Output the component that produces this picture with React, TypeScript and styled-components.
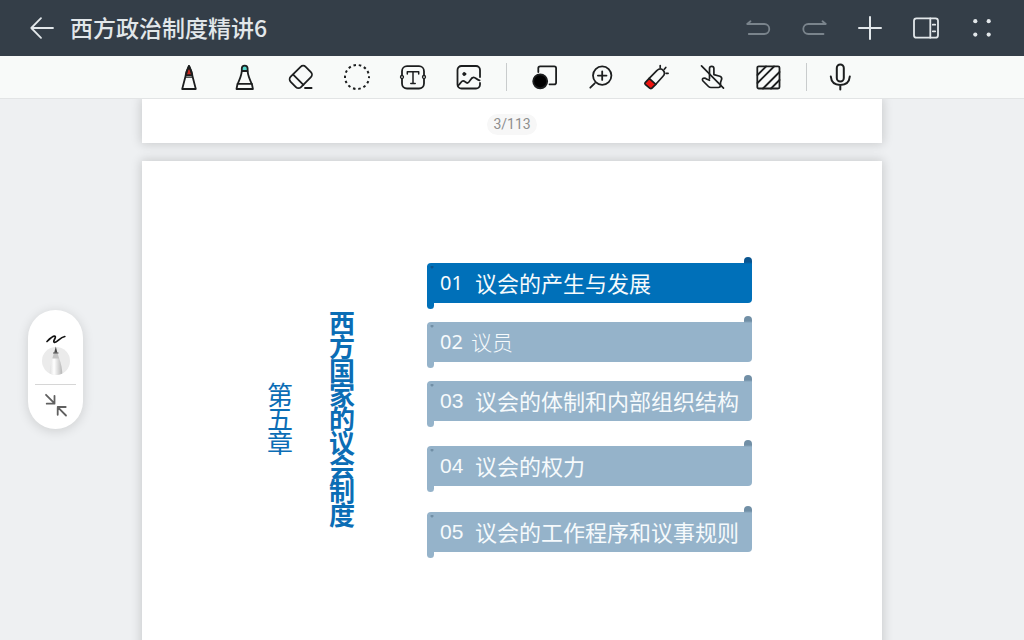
import React from "react";
import styled, { createGlobalStyle } from "styled-components";

const GlobalStyle = createGlobalStyle`
  *, *::before, *::after { box-sizing: border-box; }
  body {
    margin: 0;
    background: #eef0f2;
    font-family: "Noto Sans CJK SC", "Noto Sans", sans-serif;
  }
  h1, h2, p, ol { margin: 0; padding: 0; }
`;

const Screen = styled.div`
  height: 100vh;
  display: flex;
  flex-direction: column;
  overflow: hidden;
`;

const Header = styled.header`
  flex: none;
  height: 56px;
  display: flex;
  align-items: center;
  padding: 0 14px;
  background: #343e48;
  color: #e2e7ea;
`;

const IconButton = styled.button`
  flex: 0 1 56px;
  height: 40px;
  padding: 0;
  border: 0;
  background: none;
  color: inherit;
  display: flex;
  align-items: center;
  justify-content: center;
  cursor: pointer;

  &:disabled {
    color: #7a848c;
    cursor: default;
  }
`;

const DocTitle = styled.h1`
  flex: 1;
  padding-bottom: 2px;
  font-size: 23px;
  line-height: 32px;
  font-weight: 500;
  white-space: nowrap;
`;

const Toolbar = styled.nav`
  flex: none;
  height: 43px;
  display: flex;
  align-items: center;
  justify-content: center;
  padding-left: 5px;
  background: #f8faf9;
  border-bottom: 1px solid #e2e4e5;
  color: #1c1e1f;
`;

const Separator = styled.span<{ $before: number; $after: number }>`
  width: 1px;
  height: 28px;
  margin: 0 ${(p) => p.$after}px 0 ${(p) => p.$before}px;
  background: #c9cccd;
`;

const Viewer = styled.main`
  flex: 1;
  min-height: 0;
  overflow: hidden;
  display: flex;
  flex-direction: column;
  align-items: center;
  gap: 18px;
`;

const Sheet = styled.section`
  flex: none;
  width: calc(100% - 284px);
  background: #fff;
  box-shadow: 0 0 10px 1px rgba(0, 0, 0, 0.16);
`;

const PreviousSheet = styled(Sheet)`
  display: flex;
  justify-content: center;
  padding: 15px 0 8px;
`;

const PageBadge = styled.p`
  padding: 0 6px;
  border-radius: 11px;
  background: #f7f7f7;
  color: #8e8e8e;
  font-family: Roboto, "Liberation Sans", sans-serif;
  font-size: 14px;
  line-height: 21px;
`;

const Slide = styled(Sheet)`
  aspect-ratio: 4 / 3;
  padding: 102px 130px 0 125px;
  display: flex;
  align-items: flex-start;
`;

const SlideRow = styled.div`
  flex: 1;
  display: flex;
  align-items: center;
`;

const VerticalText = styled.p<{ $bold?: boolean; $after: number }>`
  flex: none;
  width: 26px;
  margin-right: ${(p) => p.$after}px;
  padding-bottom: 4px;
  color: #0b6db5;
  font-size: 26px;
  line-height: 24px;
  font-weight: ${(p) => (p.$bold ? 700 : 400)};
  word-break: break-all;
`;

const Banners = styled.ol`
  flex: 1;
  list-style: none;
  padding-bottom: 24px;
`;

const Banner = styled.li<{ $active?: boolean; $before: number }>`
  --fill: ${(p) => (p.$active ? "#0070b9" : "#95b3ca")};
  --curl: ${(p) => (p.$active ? "#0a5590" : "#718fa6")};
  position: relative;
  height: 40px;
  margin-top: ${(p) => p.$before}px;
  padding-left: 13px;
  display: flex;
  align-items: center;
  border-radius: 4px 0 4px 0;
  background: var(--fill);
  color: #f6fafc;
  white-space: nowrap;

  /* rolled edges of the scroll */
  &::before {
    content: "";
    position: absolute;
    left: 0;
    top: 3px;
    width: 7px;
    height: 43px;
    border-radius: 0 0 4px 4px;
    background: radial-gradient(circle at 5px 1px, var(--curl) 1px, transparent 2px), var(--fill);
  }
  &::after {
    content: "";
    position: absolute;
    right: 0;
    top: -6px;
    width: 8px;
    height: 12px;
    border-radius: 4px 4px 0 0;
    background: linear-gradient(var(--curl) 5px, var(--fill) 7px);
  }
`;

const BannerNumber = styled.span<{ $humanist?: boolean }>`
  width: 35px;
  font-family: ${(p) => (p.$humanist ? '"Noto Sans"' : '"Liberation Sans"')}, sans-serif;
  font-size: ${(p) => (p.$humanist ? 20 : 21)}px;
  line-height: 28px;
`;

const BannerText = styled.span<{ $small?: boolean }>`
  margin-left: ${(p) => (p.$small ? -4 : 0)}px;
  padding-bottom: 2px;
  font-size: ${(p) => (p.$small ? 21 : 22)}px;
  line-height: 32px;
  font-weight: ${(p) => (p.$small ? 300 : 400)};
`;

const FloatingPill = styled.aside`
  position: absolute;
  left: 28px;
  top: 310px;
  width: 55px;
  display: flex;
  flex-direction: column;
  align-items: center;
  border-radius: 28px;
  background: #fff;
  box-shadow: 0 2px 12px rgba(0, 0, 0, 0.14);
  color: #606060;
`;

const PillButton = styled.button<{ $height: number }>`
  width: 100%;
  height: ${(p) => p.$height}px;
  padding: 0;
  border: 0;
  background: none;
  color: inherit;
  display: flex;
  justify-content: center;
  cursor: pointer;
`;

const PillDivider = styled.span`
  width: 41px;
  height: 1px;
  background: #d6d6d6;
`;

const IconSvg = styled.svg`
  flex: none;
  display: block;
  width: 32px;
  height: 32px;
  fill: none;
  stroke: currentColor;
  stroke-linecap: round;
  stroke-linejoin: round;
`;

const Icon = ({ w = 1.8, children }: { w?: number; children: React.ReactNode }) => (
  <IconSvg viewBox="0 0 32 32" strokeWidth={w} aria-hidden="true">
    {children}
  </IconSvg>
);

const tools = [
  {
    label: "钢笔",
    icon: (
      <Icon>
        <path d="M12.7 14.2C13.3 11 14.8 7.5 16 5C17.200 7.5 18.700 11 19.300 14.2Z" fill="#c6281f" />
        <path d="M9.200 28L12.700 14.5C13.300 11 14.800 7.500 16 5C17.200 7.500 18.700 11 19.300 14.500L22.800 28Z" />
        <path d="M12.700 16.200H19.300" strokeWidth="1.2" />
      </Icon>
    ),
  },
  {
    label: "荧光笔",
    icon: (
      <Icon>
        <path d="M12.8 10V7.5a2.9 2.9 0 0 1 5.8 0V10Z" fill="#56d8cd" />
        <path d="M12.8 10.2C12.4 14.5 11 18 8.7 22.8H22.7C20.4 18 19 14.5 18.6 10.2Z" />
        <path d="M8.5 23L7.5 28H23.9L22.9 23" />
      </Icon>
    ),
  },
  {
    label: "橡皮擦",
    icon: (
      <Icon>
        <rect x="5.2" y="8.6" width="21.2" height="14.6" rx="3.6" transform="rotate(-45 15.8 15.9)" />
        <path d="M8.2 13.7L18.4 23.9M20 27H26.6" />
      </Icon>
    ),
  },
  {
    label: "套索",
    icon: (
      <Icon w={2}>
        <circle cx="16" cy="16" r="12" strokeDasharray="2.5 2.8856" strokeDashoffset="1.25" strokeLinecap="butt" />
      </Icon>
    ),
  },
  {
    label: "文本",
    icon: (
      <Icon>
        <rect x="5" y="5.2" width="22" height="22.3" rx="5" />
        <circle cx="5" cy="16" r="1.5" fill="#f8faf9" strokeWidth="1.3" />
        <circle cx="27" cy="16" r="1.5" fill="#f8faf9" strokeWidth="1.3" />
        <path d="M10.3 13V10.8H21.7V13M16 10.8V22.6M13.8 22.6H18.2" strokeWidth="1.5" />
      </Icon>
    ),
  },
  {
    label: "图片",
    icon: (
      <Icon>
        <path d="M27 16V9a4 4 0 0 0-4-4H8.500a4 4 0 0 0-4 4V23.500a4 4 0 0 0 4 4H23a4 4 0 0 0 4-4V22" />
        <path d="M5.300 24.300C7 23.500 8 19.800 10 19.800C12 19.800 12.500 22 14.300 22C16.800 22 17.500 16.300 20.500 16.300C22.800 16.300 24 19 26.600 19.300" />
        <circle cx="11.300" cy="13" r="1.500" fill="currentColor" strokeWidth="1" />
      </Icon>
    ),
  },
];

const extras = [
  {
    label: "形状",
    icon: (
      <Icon>
        <path d="M10.300 11V7.200a1.900 1.900 0 0 1 1.900-1.900H26.200a1.900 1.900 0 0 1 1.900 1.900V21.400a1.900 1.900 0 0 1-1.900 1.900H21.500" />
        <circle cx="12.200" cy="20.300" r="7" fill="#000" />
      </Icon>
    ),
  },
  {
    label: "放大",
    icon: (
      <Icon>
        <circle cx="18.200" cy="14.600" r="9.200" />
        <path d="M13.900 14.600H22.500M18.200 10.300V18.900M10.700 22.300L6.300 26.700" />
      </Icon>
    ),
  },
  {
    label: "激光笔",
    icon: (
      <Icon w={1.7}>
        <path d="M9.200 17.300L16.800 9.600C19.500 7.200 21.800 7.800 23.200 9.300C24.700 10.900 25 13.200 22.800 15.500L15.800 23.300" />
        <path d="M9.200 17.300L5.200 21.600Q4.500 22.500 5.200 23.300L10 27.400Q10.900 28 11.700 27.400L15.800 23.300Z" fill="#ee1410" />
        <path d="M20.200 4.500V6.500M25.800 6.500L24.300 8.300M26.100 12.300H28.100" />
      </Icon>
    ),
  },
  {
    label: "禁用手触",
    icon: (
      <Icon w={1.7}>
        <path d="M13.500 17.500V7.600a2.200 2.200 0 0 1 4.400 0V13.600L23.800 15.200Q26 15.900 25.700 18L24.500 21.500V24.700Q24.300 26.500 22.500 26.500H15Q13.500 26.500 12.500 25.500L7 20Q5.700 18.200 7.300 17.300Q9 16.700 11 18.300L13.500 19.300" />
        <path d="M5.500 4.800L27.500 27.200" />
      </Icon>
    ),
  },
  {
    label: "遮盖",
    icon: (
      <Icon>
        <rect x="5.300" y="5.300" width="22.200" height="22.200" rx="1.500" />
        <path d="M5.500 14L14 5.500M5.500 22L22 5.500M11 27.500L27.500 11M19 27.500L27.500 19" />
      </Icon>
    ),
  },
];

const banners = [
  { no: "01", text: "议会的产生与发展", before: 0, active: true, humanist: true },
  { no: "02", text: "议员", before: 19, humanist: true, small: true },
  { no: "03", text: "议会的体制和内部组织结构", before: 19 },
  { no: "04", text: "议会的权力", before: 25 },
  { no: "05", text: "议会的工作程序和议事规则", before: 26 },
];

export default function App() {
  return (
    <Screen>
      <GlobalStyle />
      <Header>
        <IconButton aria-label="返回">
          <Icon>
            <path d="M5.300 16H27M15 6.200L5.300 16L15 25.800" />
          </Icon>
        </IconButton>
        <DocTitle>西方政治制度精讲6</DocTitle>
        <IconButton aria-label="撤销" disabled>
          <Icon>
            <path d="M8.500 9.300L5.200 12H22.300a5 5 0 0 1 0 10H6.800" />
          </Icon>
        </IconButton>
        <IconButton aria-label="重做" disabled>
          <Icon>
            <path d="M24.500 9.300L27.800 12H10.300a5 5 0 0 0 0 10H25.500" />
          </Icon>
        </IconButton>
        <IconButton aria-label="添加">
          <Icon w={2}>
            <path d="M5 16H27M16 5V27" />
          </Icon>
        </IconButton>
        <IconButton aria-label="侧栏">
          <Icon>
            <rect x="4" y="6.300" width="24" height="19.400" rx="2.500" />
            <path d="M20.300 6.300V25.700M22.800 12.700H25.200M22.800 19.300H25.200" />
          </Icon>
        </IconButton>
        <IconButton aria-label="更多">
          <Icon>
            <g fill="currentColor" stroke="none">
              <circle cx="9.300" cy="9.200" r="2.100" />
              <circle cx="22.700" cy="9.200" r="2.100" />
              <circle cx="9.300" cy="22.600" r="2.100" />
              <circle cx="22.700" cy="22.600" r="2.100" />
            </g>
          </Icon>
        </IconButton>
      </Header>

      <Toolbar aria-label="工具">
        {tools.map((t) => (
          <IconButton key={t.label} aria-label={t.label}>
            {t.icon}
          </IconButton>
        ))}
        <Separator $before={9} $after={9} />
        {extras.map((t) => (
          <IconButton key={t.label} aria-label={t.label}>
            {t.icon}
          </IconButton>
        ))}
        <Separator $before={10} $after={5} />
        <IconButton aria-label="录音">
          <Icon w={2}>
            <rect x="12.800" y="3.500" width="7" height="17" rx="3.500" />
            <path d="M6.800 15.500C7.300 21 11 24 16.300 24S25.300 21 25.800 15.500M16.300 24V28.500" />
          </Icon>
        </IconButton>
      </Toolbar>

      <Viewer>
        <PreviousSheet>
          <PageBadge>3/113</PageBadge>
        </PreviousSheet>
        <Slide>
          <SlideRow>
            <VerticalText $after={36}>第五章</VerticalText>
            <VerticalText as="h2" $bold $after={72}>
              西方国家的议会制度
            </VerticalText>
            <Banners>
              {banners.map((b) => (
                <Banner key={b.no} $active={b.active} $before={b.before}>
                  <BannerNumber $humanist={b.humanist}>{b.no}</BannerNumber>
                  <BannerText $small={b.small}>{b.text}</BannerText>
                </Banner>
              ))}
            </Banners>
          </SlideRow>
        </Slide>
      </Viewer>

      <FloatingPill aria-label="快捷工具">
        <PillButton $height={74} aria-label="当前画笔">
          <svg width="40" height="74" viewBox="0 0 40 74" fill="none" aria-hidden="true">
            <defs>
              <linearGradient id="barrel">
                <stop offset="0" stopColor="#dedede" />
                <stop offset="0.35" stopColor="#ffffff" />
                <stop offset="0.7" stopColor="#d6d6d6" />
                <stop offset="1" stopColor="#b4b4b4" />
              </linearGradient>
              <clipPath id="disc">
                <circle cx="20" cy="51" r="14" />
              </clipPath>
            </defs>
            <circle cx="20" cy="51" r="14" fill="#ebebeb" />
            <path
              d="M11 31.500C13.500 29 17.500 25.500 19 26.300C20.800 27.500 16.300 31 18.200 32.200C20.800 33.500 23.500 27.500 28.800 26.500"
              stroke="#111"
              strokeWidth="1.700"
              strokeLinecap="round"
            />
            <path d="M16.300 48C14.500 54 13.800 60 13.500 66H26.500C26.200 60 25.500 54 23 48Z" fill="url(#barrel)" clipPath="url(#disc)" />
            <path d="M18.300 42L16.300 48.500H23.200L21.200 42Z" fill="#c4c4c4" />
            <path d="M19.800 36.500L18.200 42.700H21.400Z" fill="#4a4a4a" />
            <path d="M17 43H22.500" stroke="#555" strokeWidth="1" />
          </svg>
        </PillButton>
        <PillDivider />
        <PillButton $height={44} aria-label="收起">
          <svg
            width="32"
            height="40"
            viewBox="0 0 32 40"
            fill="none"
            stroke="currentColor"
            strokeWidth="1.800"
            strokeLinecap="round"
            strokeLinejoin="round"
            aria-hidden="true"
          >
            <path d="M6 9.800L14.500 18.300M6.700 18.700H14.500V10.800" />
            <path d="M26 30.500L17.700 22.200M17.700 29.800V22H25.700" />
          </svg>
        </PillButton>
      </FloatingPill>
    </Screen>
  );
}
